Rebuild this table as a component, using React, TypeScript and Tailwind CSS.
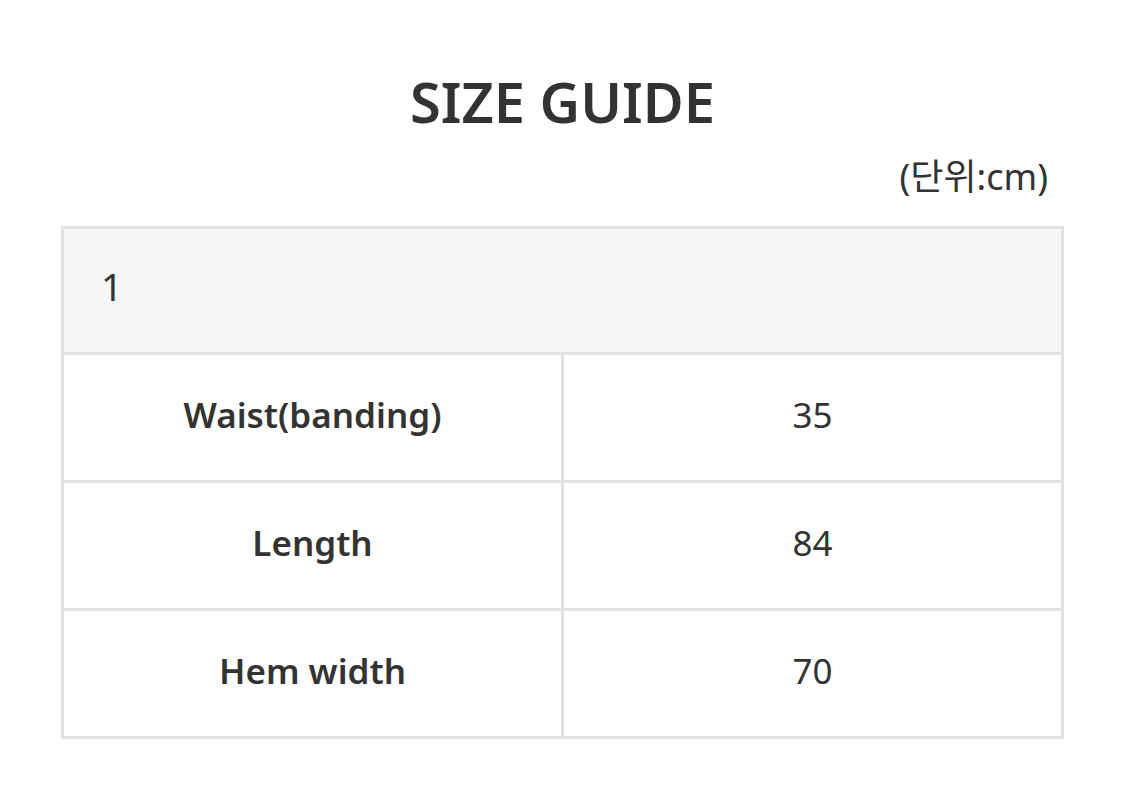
const rows = [
  { label: 'Waist(banding)', value: '35' },
  { label: 'Length', value: '84' },
  { label: 'Hem width', value: '70' },
];

const App = () => {
  return (
    <div
      className="w-[1125px] h-[805px] bg-white text-[#333] px-[61px]"
      style={{ fontFamily: '"Noto Sans", "Noto Sans CJK KR", sans-serif' }}
    >
      <h1 className="pt-[62px] text-center text-[56px] leading-[78px] font-semibold">
        SIZE GUIDE
      </h1>
      <div className="mt-[10px] text-right pr-[16px] text-[36px] leading-[54px]">(단위:cm)</div>
      <table className="mt-[22px] w-full border-collapse border-[3px] border-[#e2e2e2] table-fixed">
        <thead>
          <tr className="h-[126px] bg-[#f5f6f8]">
            <th colSpan={2} className="border-[3px] border-[#e2e2e2] text-left pl-[37px] pb-[8px] text-[38px] font-normal">
              1
            </th>
          </tr>
        </thead>
        <tbody>
          {rows.map((r) => (
            <tr key={r.label} className="h-[128px]">
              <td className="w-1/2 border-[3px] border-[#e2e2e2] text-center text-[35px] font-semibold pb-[4px]">
                {r.label}
              </td>
              <td className="border-[3px] border-[#e2e2e2] text-center text-[35px] pb-[4px]">{r.value}</td>
            </tr>
          ))}
        </tbody>
      </table>
    </div>
  );
};

export default App;
